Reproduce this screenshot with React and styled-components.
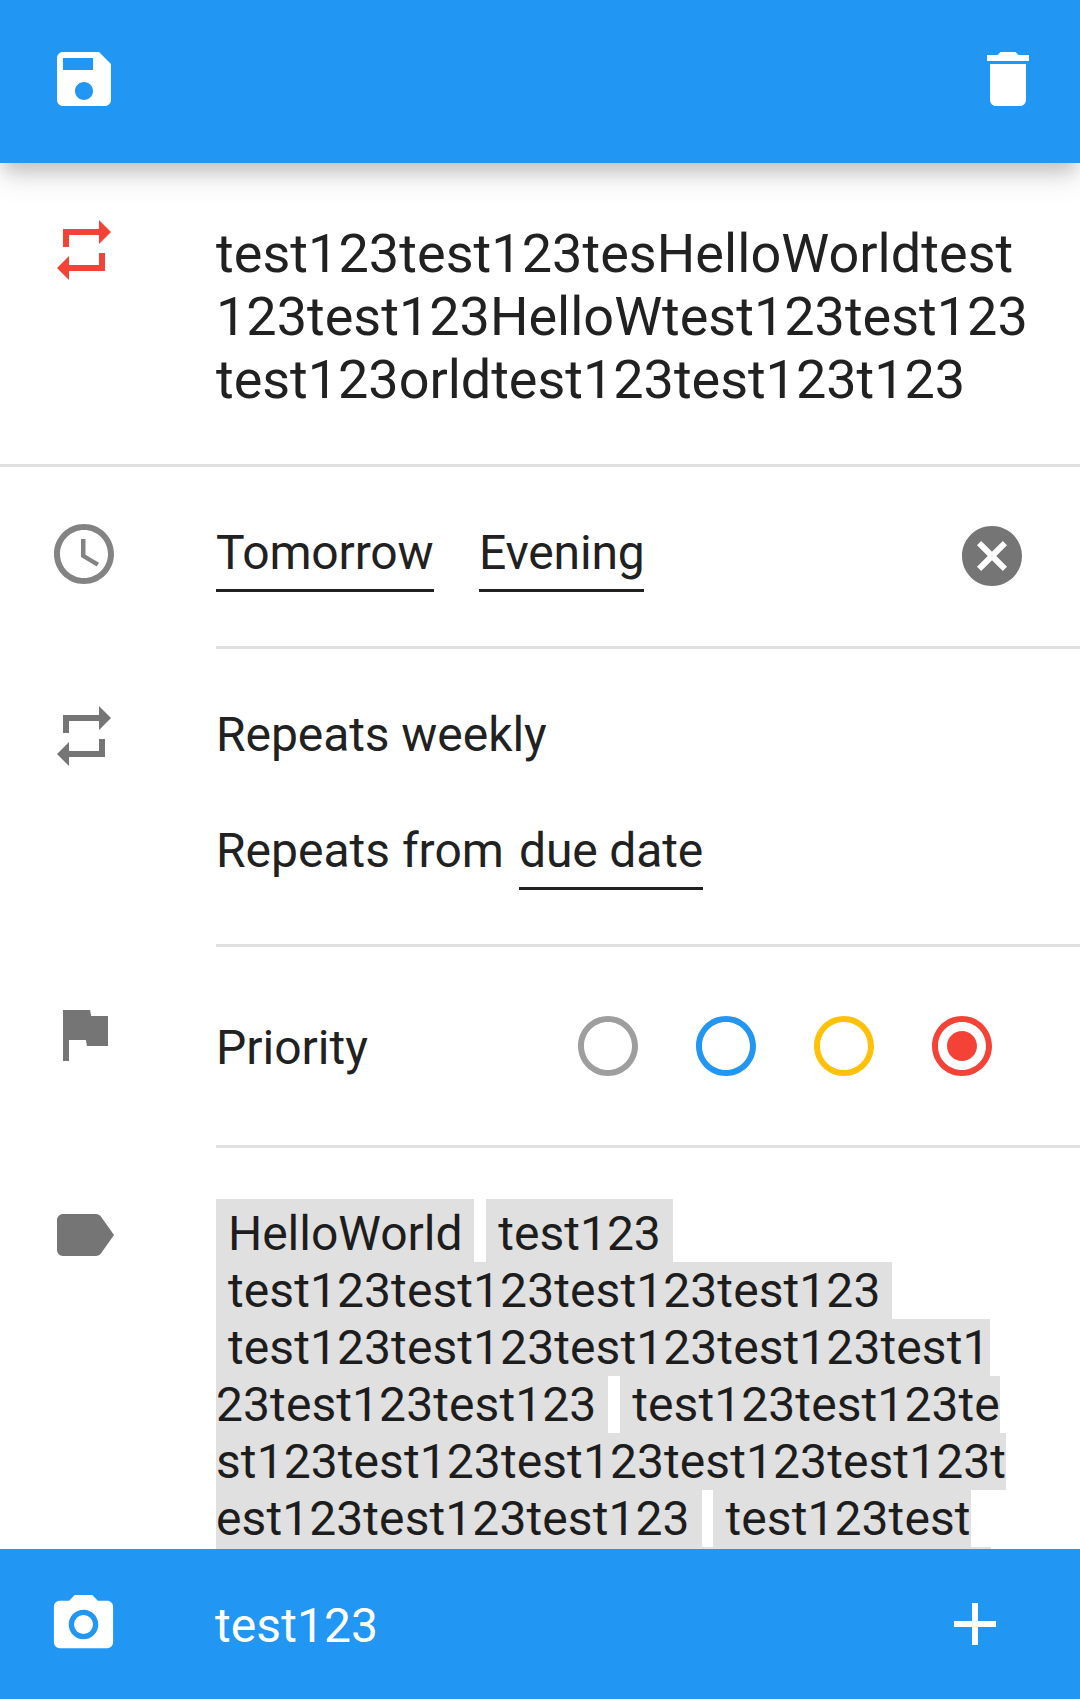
import React from "react";
import styled, { createGlobalStyle } from "styled-components";

const GlobalStyle = createGlobalStyle`
  * { box-sizing: border-box; }
  body {
    margin: 0;
    background: #fff;
    color: #212121;
    font-family: Roboto, "Noto Sans", sans-serif;
    font-size: 48px;
    line-height: 57px;
  }
`;

const Screen = styled.div`
  display: flex;
  flex-direction: column;
  width: 1080px;
  height: 1699px;
  overflow: hidden;
`;

const Toolbar = styled.header`
  display: flex;
  justify-content: space-between;
  flex: none;
  height: 163px;
  padding: 43px 36px 0 48px;
  background: #2196f3;
  color: #fff;
  z-index: 1;
  box-shadow:
    0 13px 14px -4px rgba(0, 0, 0, 0.12),
    0 15px 28px -1px rgba(0, 0, 0, 0.13);
`;

const Content = styled.main`
  flex: 1;
  min-height: 0;
  overflow: hidden;
`;

const Footer = styled.footer`
  display: flex;
  flex: none;
  height: 150px;
  padding: 39px 69px 0 48px;
  background: #2196f3;
  color: #fff;
`;

const FooterText = styled.div`
  flex: 1;
  padding: 9px 0 0 95px;
  letter-spacing: 0.08px;
`;

const IconButton = styled.button`
  display: block;
  flex: none;
  width: 72px;
  height: 72px;
  padding: 0;
  border: 0;
  background: none;
  color: inherit;
`;

const Glyph = styled.svg`
  display: block;
  width: ${(p) => p.$size || "72px"};
  height: ${(p) => p.$size || "72px"};
  fill: currentColor;
`;

const Section = styled.section`
  display: flex;
  height: ${(p) => p.$height};
  border-bottom: ${(p) => (p.$ruled ? "3px solid #e0e0e0" : "0")};
`;

const IconCell = styled.div`
  flex: none;
  width: 216px;
  padding: 51px 0 0 48px;
  color: ${(p) => p.$color || "#757575"};
`;

const Body = styled.div`
  flex: 1;
  min-width: 0;
  padding-top: 57px;
  border-bottom: ${(p) => (p.$ruled ? "3px solid #e0e0e0" : "0")};
`;

const Title = styled.h1`
  margin: 2px 0 0;
  font-size: 54px;
  line-height: 63px;
  font-weight: 400;
`;

const TitleLine = styled.span`
  display: block;
  letter-spacing: ${(p) => p.$tracking || "0"};
`;

const FieldRow = styled.div`
  display: flex;
  align-items: flex-start;
`;

const Picker = styled.span`
  flex: none;
  width: ${(p) => p.$width};
  padding-bottom: 8px;
  margin-right: ${(p) => p.$gap || "0"};
  border-bottom: 3px solid #212121;
  letter-spacing: -0.15px;
  white-space: nowrap;
`;

const ClearButton = styled(IconButton)`
  margin: -4px 52px 0 auto;
  color: #757575;
`;

const RepeatSummary = styled(FieldRow)`
  letter-spacing: -0.07px;
`;

const RepeatFrom = styled(FieldRow)`
  margin-top: 59px;
`;

const RepeatLabel = styled.span`
  width: 303px;
`;

const PriorityRow = styled(FieldRow)`
  justify-content: space-between;
  padding: 6px 82px 0 0;
`;

const PriorityLabel = styled.span`
  padding-top: 9px;
`;

const Radios = styled.div`
  display: flex;
  gap: 46px;
`;

const Radio = styled(IconButton)`
  color: ${(p) => p.$color};
`;

const Tags = styled.div`
  white-space: pre;
  color: #1d1d1d;
`;

const Tag = styled.span`
  padding-top: ${(p) => (p.$first ? "6px" : "0")};
  background: #e0e0e0;
  letter-spacing: ${(p) => (p.$first ? "0" : "0.08px")};
`;

const paths = {
  save: "M17.59 3H5c-1.11 0-2 .9-2 2v14c0 1.1.89 2 2 2h14c1.1 0 2-.9 2-2V7l-4-4zM12 19c-1.66 0-3-1.34-3-3s1.34-3 3-3 3 1.34 3 3-1.34 3-3 3zm3-10H5V5h10v4z",
  trash: "M6 19c0 1.1.9 2 2 2h8c1.1 0 2-.9 2-2V7H6v12zM19 4h-3.5l-1-1h-5l-1 1H5v2h14V4z",
  repeat: "M7 7h10v3l4-4-4-4v3H5v6h2V7zm10 10H7v-3l-4 4 4 4v-3h12v-6h-2v4z",
  clock: "M11.99 2C6.47 2 2 6.48 2 12s4.47 10 9.99 10C17.52 22 22 17.52 22 12S17.52 2 11.99 2zM12 20c-4.42 0-8-3.58-8-8s3.58-8 8-8 8 3.58 8 8-3.58 8-8 8zM12.5 7H11v6l5.25 3.15.75-1.23-4.5-2.67z",
  cancel: "M12 2C6.47 2 2 6.47 2 12s4.47 10 10 10 10-4.47 10-10S17.53 2 12 2zm5 13.59L15.59 17 12 13.41 8.41 17 7 15.59 10.59 12 7 8.41 8.41 7 12 10.59 15.59 7 17 8.41 13.41 12 17 15.59z",
  flag: "M14.4 6L14 4H5v17h2v-7h5.6l.4 2h7V6z",
  radio: "M12 2C6.48 2 2 6.48 2 12s4.48 10 10 10 10-4.48 10-10S17.52 2 12 2zm0 18c-4.42 0-8-3.58-8-8s3.58-8 8-8 8 3.58 8 8-3.58 8-8 8z",
  radioOn: "M12 7c-2.76 0-5 2.24-5 5s2.24 5 5 5 5-2.24 5-5-2.24-5-5-5zm0-5C6.48 2 2 6.48 2 12s4.48 10 10 10 10-4.48 10-10S17.52 2 12 2zm0 18c-4.42 0-8-3.58-8-8s3.58-8 8-8 8 3.58 8 8-3.58 8-8 8z",
  label: "M17.63 5.84C17.27 5.33 16.67 5 16 5L5 5.01C3.9 5.01 3 5.9 3 7v10c0 1.1.9 1.99 2 1.99L16 19c.67 0 1.27-.33 1.63-.84L22 12l-4.37-6.16z",
  camera: "M12 8.8a3.2 3.2 0 1 0 0 6.4 3.2 3.2 0 1 0 0-6.4zM9 2L7.17 4H4c-1.1 0-2 .9-2 2v12c0 1.1.9 2 2 2h16c1.1 0 2-.9 2-2V6c0-1.1-.9-2-2-2h-3.17L15 2H9zm3 15c-2.76 0-5-2.24-5-5s2.24-5 5-5 5 2.24 5 5-2.24 5-5 5z",
  plus: "M19 13h-6v6h-2v-6H5v-2h6V5h2v6h6v2z",
};

const Icon = ({ name, opacity, size }) => (
  <Glyph viewBox="0 0 24 24" fillOpacity={opacity} $size={size} aria-hidden="true">
    <path fillRule="evenodd" d={paths[name]} />
  </Glyph>
);

const priorities = [
  { name: "None", color: "#9e9e9e" },
  { name: "Low", color: "#2196f3" },
  { name: "Medium", color: "#ffc107" },
  { name: "High", color: "#f44336", selected: true },
];

const tags = [
  { text: " HelloWorld ", after: " ", first: true },
  { text: " test123 ", after: "\n", first: true },
  { text: " test123test123test123test123 ", after: "\n" },
  { text: " test123test123test123test123test1\n23test123test123 ", after: " " },
  {
    text: " test123test123te\nst123test123test123test123test123t\nest123test123test123 ",
    after: " ",
  },
  { text: " test123test\n123test123test123test123test123te", after: "" },
];

export default function App() {
  return (
    <>
      <GlobalStyle />
      <Screen>
        <Toolbar>
          <IconButton aria-label="Save"><Icon name="save" /></IconButton>
          <IconButton aria-label="Delete"><Icon name="trash" /></IconButton>
        </Toolbar>
        <Content>
          <Section $height="304px" $ruled>
            <IconCell $color="#f44336"><Icon name="repeat" /></IconCell>
            <Body>
              <Title>
                <TitleLine $tracking="0.05px">test123test123tesHelloWorldtest</TitleLine>
                <TitleLine>123test123HelloWtest123test123</TitleLine>
                <TitleLine $tracking="-0.03px">test123orldtest123test123t123</TitleLine>
              </Title>
            </Body>
          </Section>
          <Section $height="182px">
            <IconCell><Icon name="clock" opacity={0.9} /></IconCell>
            <Body $ruled>
              <FieldRow>
                <Picker $width="218px" $gap="45px">Tomorrow</Picker>
                <Picker $width="165px">Evening</Picker>
                <ClearButton aria-label="Clear date"><Icon name="cancel" /></ClearButton>
              </FieldRow>
            </Body>
          </Section>
          <Section $height="298px">
            <IconCell><Icon name="repeat" /></IconCell>
            <Body $ruled>
              <RepeatSummary>Repeats weekly</RepeatSummary>
              <RepeatFrom>
                <RepeatLabel>Repeats from</RepeatLabel>
                <Picker $width="184px">due date</Picker>
              </RepeatFrom>
            </Body>
          </Section>
          <Section $height="201px">
            <IconCell><Icon name="flag" /></IconCell>
            <Body $ruled>
              <PriorityRow>
                <PriorityLabel>Priority</PriorityLabel>
                <Radios>
                  {priorities.map((p) => (
                    <Radio key={p.name} $color={p.color} aria-label={p.name}>
                      <Icon name={p.selected ? "radioOn" : "radio"} />
                    </Radio>
                  ))}
                </Radios>
              </PriorityRow>
            </Body>
          </Section>
          <Section $height="480px">
            <IconCell><Icon name="label" /></IconCell>
            <Body>
              <Tags>
                {tags.map((t, i) => (
                  <React.Fragment key={i}>
                    <Tag $first={t.first}>{t.text}</Tag>
                    {t.after}
                  </React.Fragment>
                ))}
              </Tags>
            </Body>
          </Section>
        </Content>
        <Footer>
          <IconButton aria-label="Camera"><Icon name="camera" size="71px" /></IconButton>
          <FooterText>test123</FooterText>
          <IconButton aria-label="Add"><Icon name="plus" /></IconButton>
        </Footer>
      </Screen>
    </>
  );
}
